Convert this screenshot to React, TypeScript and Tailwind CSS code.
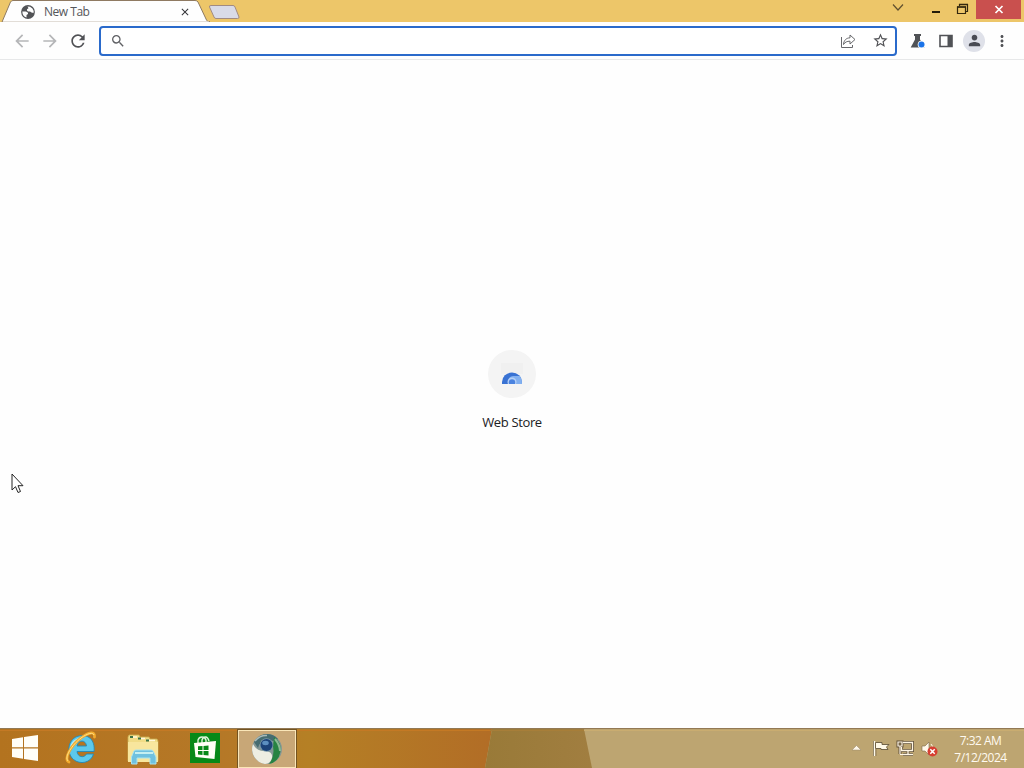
import { MdRefresh, MdSearch, MdStarBorder, MdArrowBack, MdArrowForward, MdClose, MdPerson, MdMoreVert } from "react-icons/md";

function TabStrip() {
  return (
    <div className="flex h-[22px] w-full bg-[#edc669]">
      <div className="relative h-[22px] w-[242px] shrink-0">
        {/* tab outline and the new tab button */}
        <svg className="absolute inset-0" width="242" height="22" viewBox="0 0 242 22">
          <path d="M2 22 L10.5 2 Q11.5 0.5 13 0.5 H195 Q197 0.5 198 2 L206.5 20 Q207.500 22 210 22 Z" fill="#fefefe" stroke="#8f7a62" />
          <path d="M3 22.500 H209" stroke="#fefefe" strokeWidth="2" />
          <path d="M211 5.500 H233 Q234.500 5.500 235 7 L239 17 Q239.300 18.500 237.500 18.500 H216 Q214.500 18.500 214 17 L209.500 7 Q209 5.500 211 5.500 Z" fill="#d9dbe8" stroke="#a18b83" />
        </svg>
        <div className="relative flex h-full items-center pl-5">
          <svg className="mt-[2px]" width="16" height="16" viewBox="0 0 16 16">
            <circle cx="8" cy="8" r="6.900" fill="#525356" />
            <path d="M2.300 7.500 H6 L8 8.700 V10 L6.500 11 V13.600 Q2.500 12.500 2.300 7.500 Z" fill="#fefefe" />
            <path d="M7.500 2.500 L10 2.700 Q13 4 13.700 7 L13.500 9 L11.500 8.500 L10 7.500 H8 L7 6.500 V5.200 L8.500 4.300 Z" fill="#fefefe" />
          </svg>
          <span className="ml-2 mt-[2px] w-[135px] text-[12px] leading-4 tracking-[-0.48px] text-[#55565a]">New Tab</span>
          <MdClose size={12} className="mt-[2px] text-[#333438]" stroke="currentColor" />
        </div>
      </div>
      <div className="flex-1" />
      <svg width="134" height="22" viewBox="0 0 134 22" fill="none">
        <path d="M3 4.500 L8 10 L13 4.500" stroke="#60502f" strokeWidth="1.200" />
        <path d="M42 12 H50" stroke="#231b0a" strokeWidth="2" />
        <path d="M67.500 7 H75.500 V13.500 H67.500 Z M69.500 6 V4.500 H77.500 V11.500 H76" stroke="#33270e" strokeWidth="1.200" />
        <path d="M67 7 H76 M69 4.500 H78" stroke="#33270e" strokeWidth="1.500" />
        <path d="M86 0 H131 V19 H86 Z" fill="#c9504e" />
        <path d="M105.500 6 L112.500 13 M112.500 6 L105.500 13" stroke="#fff" strokeWidth="1.700" />
      </svg>
    </div>
  );
}

function Toolbar() {
  return (
    <div className="flex h-[38px] items-center border-b border-[#e7e8e9] bg-[#fefefe]">
      <div className="flex w-[99px] shrink-0 items-center gap-[8px] pl-[12px]">
        <MdArrowBack size={20} className="text-[#b5b6b8]" />
        <MdArrowForward size={20} className="text-[#b5b6b8]" />
        <MdRefresh size={20} className="text-[#505155]" />
      </div>
      <div className="flex h-[30px] w-[798px] shrink-0 items-center justify-between rounded-[4px] border-2 border-[#2a6acb] bg-white pl-[9px] pr-[6px]">
        <MdSearch size={16} className="text-[#5f6064]" />
        <div className="flex items-center gap-[16px]">
          <svg width="16" height="16" viewBox="0 0 16 16" fill="none" stroke="#67686b">
            <path d="M1.500 4 V14.500 H12.500 V12" />
            <path d="M3.500 11.500 C3.800 7.500 6 5 10 4.800 V2 L15 6.500 L10 11 V8.200 C7 8.200 5 9 3.500 11.500 Z" strokeLinejoin="round" />
          </svg>
          <MdStarBorder size={17} className="text-[#515256]" />
        </div>
      </div>
      <div className="flex items-center pl-[13px]">
        <svg width="16" height="16" viewBox="0 0 16 16">
          <path d="M4 1 H11 V3 H10 V6.500 L14.500 14.500 H0.700 L5 6.500 V3 H4 Z" fill="#505256" />
          <circle cx="11.500" cy="11.500" r="3.800" fill="#fefefe" />
          <circle cx="11.500" cy="11.500" r="3" fill="#1a73e8" />
        </svg>
        <svg className="ml-[12px]" width="16" height="16" viewBox="0 0 16 16">
          <path d="M2 2.500 H14 V13.500 H2 Z" fill="none" stroke="#505256" strokeWidth="1.600" />
          <path d="M9.500 2 H14 V14 H9.500 Z" fill="#505256" />
        </svg>
        <div className="ml-[9px] flex h-[22px] w-[22px] items-center justify-center rounded-full bg-[#dfe1e9]">
          <MdPerson size={17} className="text-[#494b53]" />
        </div>
        <MdMoreVert size={18} className="ml-[8px] text-[#515256]" />
      </div>
    </div>
  );
}

function NewTabPage() {
  return (
    <div className="flex flex-1 flex-col items-center bg-[#fefefe] pt-[290px]">
      <div className="flex h-[48px] w-[48px] items-center justify-center rounded-full bg-[#f4f4f4]">
        <svg width="24" height="24" viewBox="0 0 24 24">
          <path d="M1 1 H23 V12 H1 Z" fill="#f0f0f0" />
          <path d="M2 22 V20 A10 9.500 0 0 1 22 20 V22 Z" fill="#3972d3" />
          <path d="M8 22 Q7 15 13 14 H20 Q22 17 22 22 Z" fill="#82b0f0" />
          <circle cx="12" cy="20" r="4.500" fill="#b5d0f6" />
          <circle cx="12" cy="20.500" r="3.200" fill="#4b83df" />
          <path d="M0 22 H24 V25 H0 Z" fill="#f4f4f4" />
        </svg>
      </div>
      <p className="mt-[14px] text-[13px] leading-5 tracking-[-0.36px] text-[#202124]">Web Store</p>
    </div>
  );
}

function WindowsLogo() {
  return (
    <svg width="28" height="28" viewBox="0 0 28 28" fill="#fffef8">
      <path d="M1 5 L12 3.300 V13.300 H1 Z M13 3.100 L27 1 V13.300 H13 Z M1 14.500 H12 V24.700 L1 23 Z M13 14.500 H27 V27 L13 24.900 Z" />
    </svg>
  );
}

function ExplorerLogo() {
  return (
    <svg width="34" height="34" viewBox="0 0 34 34" fillRule="evenodd">
      <path d="M30 20.500 H13 C13.500 26 20 27.500 22.500 23 H29.500 C27 32 16 34 9.500 28.500 C2 22 4 9 13 5.500 C24 2 31.500 9 30 20.500 Z M13 15 H22.500 C22 8.500 14 8.500 13 15 Z" fill="#5cc9ec" stroke="#2488b5" strokeWidth="0.900" />
      <path d="M7 18 C7 11 12 7.500 18 7.500" fill="none" stroke="#b4ecf8" strokeWidth="1.600" />
      <path d="M5 31 C-1 29 7 14 17 7 C25 1 31 0 30.500 6" fill="none" stroke="#f3ab2d" strokeWidth="2.800" strokeLinecap="round" />
      <path d="M4 30 C0 26 8 14 17 7 C24 2 29 1 30 4" fill="none" stroke="#ffe28a" strokeWidth="1" />
    </svg>
  );
}

function FolderIcon() {
  return (
    <svg width="34" height="32" viewBox="0 0 34 32">
      <path d="M2 4 L3 2 H13 L14 4 H23 L24 6 H31 L32 8 V28 H2 Z" fill="#f1dc86" stroke="#c9ad53" strokeWidth="0.800" />
      <path d="M4 4 H7 M12 5.500 H15 M20 7.500 H23" stroke="#3d7446" strokeWidth="1.800" />
      <path d="M7 4 H11 M15 5.500 H19 M23 7.500 H29" stroke="#fff7dc" strokeWidth="1.400" />
      <path d="M2 9 H32 V29 H2 Z" fill="#f8e69d" />
      <path d="M5.500 31 V24 L8 18 Q8.500 17 10 17 H25 Q26.500 17 27 18 L30 24 V31 H24 V25 H11 V31 Z" fill="#70c1df" stroke="#a9e4ef" />
      <path d="M9 20 H27" stroke="#c5eff1" strokeWidth="2" />
    </svg>
  );
}

function StoreIcon() {
  return (
    <svg width="30" height="30" viewBox="0 0 30 30">
      <path d="M0 0 H30 V30 H0 Z" fill="#078918" />
      <path d="M8 10 V7 Q9 4 12 4 Q15 4 16 7 V9 M12 10 V7 Q13 3.500 16 4 Q18 4.500 19 8" fill="none" stroke="#dcf3d8" strokeWidth="1.400" />
      <path d="M4 10 L26 8 L24.500 26 L5.500 24 Z" fill="#fffff7" />
      <path d="M8 13.300 L12.500 13 V17 H8 Z M13.500 12.900 L18.500 12.500 V17 H13.500 Z M8 18 H12.500 V22 L8 21.500 Z M13.500 18 H18.500 V22.500 L13.500 22 Z" fill="#078918" />
    </svg>
  );
}

function BrowserOrb() {
  return (
    <svg width="32" height="32" viewBox="0 0 32 32">
      <circle cx="16" cy="16" r="15" fill="#849795" />
      <path d="M16 1 A15 15 0 0 1 27 6 Q23 9 14 8 Q8 9 7 15 L3 9 Q8 1 16 1 Z" fill="#466c70" />
      <path d="M4 8 Q9 2 16 2.500" stroke="#a9bbb9" strokeWidth="1.500" fill="none" />
      <path d="M23 4 A15 15 0 0 1 18 31 Q24 23 22 13 Z" fill="#278342" />
      <path d="M24 6 Q29 12 29 18" stroke="#8bba95" strokeWidth="2" fill="none" />
      <path d="M2 11 Q6 19 15 18 Q22 19 21 25 Q19 31 14 31 A15 15 0 0 1 2 11 Z" fill="#eeeee2" />
      <circle cx="15.500" cy="12" r="6.800" fill="#7898a9" />
      <circle cx="15.500" cy="12" r="6" fill="#1c4379" />
      <ellipse cx="14.500" cy="10" rx="3.300" ry="2.200" fill="#5c8fc0" />
    </svg>
  );
}

function Tray() {
  return (
    <svg width="88" height="20" viewBox="0 0 88 20" fill="none">
      <path d="M1 12 L5.500 7.500 L10 12 Z" fill="#fff8e9" stroke="#95846a" strokeWidth="0.500" />
      <path d="M22.500 3 V18 M24.800 11 V18" stroke="#6e5c3e" strokeWidth="0.900" />
      <path d="M23.500 3 V18" stroke="#fffbed" strokeWidth="1.500" />
      <path d="M24.500 4.500 H31 V6.500 H38 L35.500 9 L37 11.500 H30 V10.500 H24.500 Z" fill="#fff8e6" stroke="#67583c" strokeWidth="0.900" />
      <path d="M52 4.500 H61.500 V12.500 H50.500 V9 M57 13 V16 M52 16.500 H62 M47 4 H51 V8 H47 Z M49 8 V16" stroke="#62523a" strokeWidth="3" />
      <path d="M52 4.500 H61.500 V12.500 H50.500 V9 M57 13 V16 M52 16.500 H62" stroke="#fff6e4" strokeWidth="1.300" />
      <path d="M47 4 H51 V8 H47 Z M49 8 V16 M49 16.500 H53" stroke="#fff6e4" strokeWidth="1.200" />
      <path d="M71 8 H74 L78 4 V17 L74 13 H71 Z" fill="#fff8e9" stroke="#786748" strokeWidth="0.600" />
      <path d="M80 6 Q82 8 82 11" stroke="#fff8e9" />
      <circle cx="81.500" cy="13.500" r="5" fill="#d63e31" />
      <path d="M79.300 11.300 L83.700 15.700 M83.700 11.300 L79.300 15.700" stroke="#fff" strokeWidth="1.500" />
    </svg>
  );
}

function Taskbar() {
  return (
    <div className="relative flex h-[40px] w-full shrink-0 items-center border-t border-[#927955] bg-[#bda571]">
      {/* wallpaper colours showing through the glass */}
      <svg className="absolute inset-0" width="1024" height="39" viewBox="0 0 1024 39" preserveAspectRatio="none">
        <defs>
          <linearGradient id="amber" x1="0" x2="1" y1="0" y2="0">
            <stop offset="0" stopColor="#b3731f" />
            <stop offset="0.450" stopColor="#b57827" />
            <stop offset="0.630" stopColor="#b58025" />
            <stop offset="1" stopColor="#b26d26" />
          </linearGradient>
          <linearGradient id="olive" x1="0" x2="1" y1="0" y2="0">
            <stop offset="0" stopColor="#997a38" />
            <stop offset="1" stopColor="#a17e40" />
          </linearGradient>
        </defs>
        <path d="M0 0 H492 L485 39 H0 Z" fill="url(#amber)" />
        <path d="M492 0 H584 L592 39 H485 Z" fill="url(#olive)" />
        <path d="M0 1.500 H490" stroke="#c47924" />
        <path d="M490 1.500 H584" stroke="#a77e39" />
        <path d="M584 1.500 H1024" stroke="#c9ac70" />
      </svg>
      <div className="relative flex h-full w-full items-center">
        <div className="mb-[2px] ml-[11px]"><WindowsLogo /></div>
        <div className="mb-[2px] ml-[25px]"><ExplorerLogo /></div>
        <div className="ml-[28px]"><FolderIcon /></div>
        <div className="mb-[1px] ml-[30px]"><StoreIcon /></div>
        <div className="ml-[17px] flex h-[40px] w-[60px] items-center justify-center border border-[#735321] p-0">
          <div className="flex h-full w-full items-center justify-center border border-[#fae6b8] bg-[#c8a777]">
            <BrowserOrb />
          </div>
        </div>
        <div className="mb-[2px] ml-auto mr-[85px]"><Tray /></div>
      </div>
      <div className="relative -ml-[87px] flex h-full w-[87px] shrink-0 flex-col items-center justify-center text-[12px] leading-[17px] tracking-[-0.5px] text-[#fffaf0]">
        <span>7:32 AM</span>
        <span>7/12/2024</span>
      </div>
    </div>
  );
}

function App() {
  return (
    <div className="relative flex h-[768px] w-[1024px] flex-col overflow-hidden font-['Open_Sans','Noto_Sans',sans-serif]">
      <TabStrip />
      <Toolbar />
      <NewTabPage />
      <Taskbar />
      {/* mouse pointer */}
      <svg className="absolute left-[11px] top-[473px]" width="14" height="22" viewBox="0 0 14 22">
        <path d="M1 1 V17 L4.500 13.700 L7 19.500 L9.500 18.500 L7 12.700 H12 Z" fill="#fff" stroke="#252525" />
      </svg>
    </div>
  );
}

export default App;
